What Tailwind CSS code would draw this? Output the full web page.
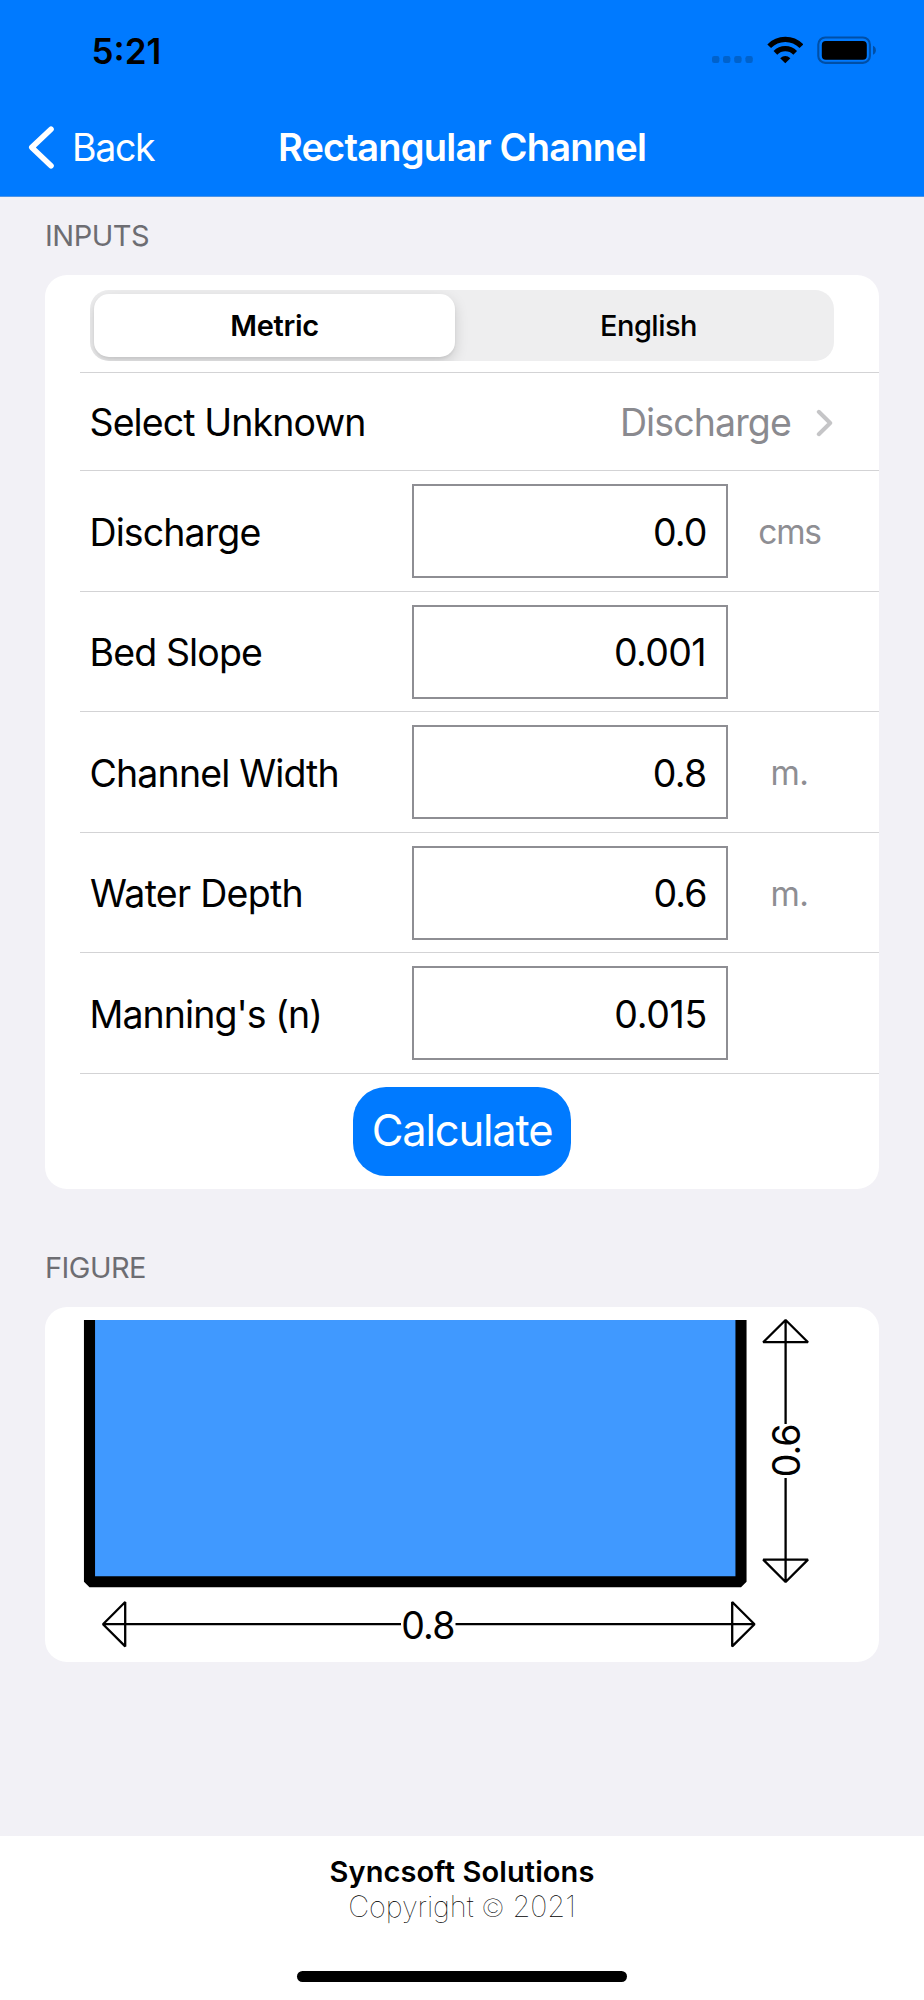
<!DOCTYPE html>
<html lang="en">
<head>
<meta charset="utf-8">
<title>Rectangular Channel</title>
<script src="https://cdn.jsdelivr.net/npm/@tailwindcss/browser@4"></script>
</head>
<body class="flex h-[2000px] w-[924px] flex-col overflow-hidden bg-[#f2f1f6] font-[Inter,'Liberation_Sans',sans-serif] text-black">

  <header class="h-[197px] shrink-0 border-b border-[#4d94e6] bg-[#007aff]">
    <!-- Status bar -->
    <div class="flex h-[98px] items-start justify-between pl-[91.5px] pr-[48px]">
      <time class="mt-[33px] text-[35px]/[36px] font-semibold">5:21</time>
      <div class="mt-[36px] flex">
        <svg class="h-7 w-[42px]" viewBox="0 0 42 28" fill="#0062cc">
          <rect x="0" y="20" width="7.4" height="7" rx="2.2"/>
          <rect x="11" y="20" width="7.4" height="7" rx="2.2"/>
          <rect x="22.2" y="20" width="7.4" height="7" rx="2.2"/>
          <rect x="33.4" y="20" width="7.4" height="7" rx="2.2"/>
        </svg>
        <svg class="ml-[13px] h-7 w-9" viewBox="0 0 36 28" fill="none" stroke="#000" stroke-width="5.2">
          <path d="M2.2 10.2A22.5 22.5 0 0 1 34.4 10.2"/>
          <path d="M8.4 16.8A14 14 0 0 1 28.2 16.8"/>
          <path d="M18.3 27.2L13.2 22.2Q18.3 17.6 23.4 22.2Z" fill="#000" stroke="none"/>
        </svg>
        <svg class="ml-[14px] h-7 w-[59px]" viewBox="0 0 59 28">
          <rect x="1.3" y="1.5" width="51.6" height="25.4" rx="7" fill="none" stroke="#004fa6" stroke-width="2.1"/>
          <rect x="4.8" y="5" width="45" height="18.8" rx="4" fill="#000"/>
          <path d="M56 9.8C59.8 11.2 59.8 17.2 56 18.8Z" fill="#004fa6"/>
        </svg>
      </div>
    </div>
    <!-- Navigation bar -->
    <div class="grid h-[98px] grid-cols-[1fr_auto_1fr] items-center text-[38px]/[46px] text-white">
      <a class="flex items-center pl-[28px]">
        <svg class="h-[44px] w-[27px]" viewBox="0 0 27 44" fill="none" stroke="#fff" stroke-width="5.6" stroke-linecap="round" stroke-linejoin="round"><path d="M23 4.2L3.8 22.4L23 40.8"/></svg>
        <span class="ml-[17px] pt-px text-[37.5px] tracking-[-1.3px]">Back</span>
      </a>
      <h1 class="font-semibold tracking-[-0.78px]">Rectangular Channel</h1>
    </div>
  </header>

  <main class="flex grow flex-col px-[45px]">
    <h2 class="mt-[21px] h-[57px] text-[29px]/[36px] tracking-[-0.5px] text-[#6d6d72]">INPUTS</h2>

    <section class="h-[914px] shrink-0 rounded-[22px] bg-white pl-[35px]">
      <div class="h-[98px] border-b border-[#d3d3d5] pl-[10px] pt-[15px]">
        <div class="flex h-[71px] w-[744px] overflow-hidden rounded-[19px] bg-[#eeeeef] text-[29px]/[64px]">
          <div class="mt-1 ml-1 h-[63px] w-[361px] rounded-[15px] bg-white text-center font-semibold tracking-[-0.3px] shadow-[0_5px_14px_rgba(0,0,0,0.15),0_2px_3px_rgba(0,0,0,0.06)]">Metric</div>
          <div class="mt-1 ml-[8px] w-[371px] text-center font-medium tracking-[-0.5px]">English</div>
        </div>
      </div>

      <div class="flex h-[98px] items-center border-b border-[#d3d3d5] pl-[9.5px] pt-[3px] text-[37.5px]/[46px]">
        <span class="tracking-[-0.9px]">Select Unknown</span>
        <span class="ml-auto tracking-[-0.87px] text-[#8a8a8f]">Discharge</span>
        <svg class="mr-[45px] ml-[24px] h-[28px] w-[19px]" viewBox="0 0 19 28" fill="none" stroke="#c5c5c7" stroke-width="4" stroke-linecap="round" stroke-linejoin="round"><path d="M3.8 2.8L15.2 14L3.8 25.2"/></svg>
      </div>

      <div class="flex h-[121px] items-start border-b border-[#d3d3d5] pt-[13px] text-[37.5px]/[96px]">
        <label class="w-[332px] pt-px pl-[9.5px] tracking-[-0.9px]">Discharge</label>
        <div class="h-[94px] w-[315.5px] border-2 border-[#8e8e93] pr-[19px] text-right leading-[94px] tracking-[-0.9px]">0.0</div>
        <span class="w-[124px] text-center text-[33.5px] tracking-[-1.3px] text-[#8e8e93]">cms</span>
      </div>
      <div class="flex h-[120px] items-start border-b border-[#d3d3d5] pt-[13px] text-[37.5px]/[96px]">
        <label class="w-[332px] pl-[9.5px] tracking-[-0.87px]">Bed Slope</label>
        <div class="h-[94px] w-[315.5px] border-2 border-[#8e8e93] pr-[19.5px] text-right leading-[92px] tracking-[-0.6px]">0.001</div>
      </div>
      <div class="flex h-[121px] items-start border-b border-[#d3d3d5] pt-[13px] text-[37.5px]/[96px]">
        <label class="w-[332px] pt-px pl-[9.5px] tracking-[-0.85px]">Channel Width</label>
        <div class="h-[94px] w-[315.5px] border-2 border-[#8e8e93] pr-[19px] text-right leading-[94px] tracking-[-0.7px]">0.8</div>
        <span class="w-[124px] text-center text-[33.5px] tracking-[-0.4px] text-[#8e8e93]">m.</span>
      </div>
      <div class="flex h-[120px] items-start border-b border-[#d3d3d5] pt-[13px] text-[37.5px]/[96px]">
        <label class="w-[332px] pl-[10px] tracking-[-0.72px]">Water Depth</label>
        <div class="h-[94px] w-[315.5px] border-2 border-[#8e8e93] pr-[19px] text-right leading-[92px] tracking-[-0.9px]">0.6</div>
        <span class="w-[124px] text-center text-[33.5px] tracking-[-0.4px] text-[#8e8e93]">m.</span>
      </div>
      <div class="flex h-[121px] items-start border-b border-[#d3d3d5] pt-[13px] text-[37.5px]/[96px]">
        <label class="w-[332px] pt-px pl-[9.5px] tracking-[-0.92px]">Manning's (n)</label>
        <div class="h-[94px] w-[315.5px] border-2 border-[#8e8e93] pr-[18.5px] text-right leading-[94px] tracking-[-0.3px]">0.015</div>
      </div>

      <div class="pt-[13px] pl-[273px]">
        <button class="block h-[89px] w-[218px] rounded-[33px] bg-[#007aff] pb-[2px] text-center text-[43.5px]/[87px] tracking-[-1.2px] text-white">Calculate</button>
      </div>
    </section>

    <h2 class="mt-[61px] h-[57px] text-[29px]/[36px] tracking-[-0.55px] text-[#6d6d72]">FIGURE</h2>

    <section class="h-[355px] shrink-0 rounded-[22px] bg-white">
      <svg class="block h-[355px] w-[834px]" viewBox="45 1307 834 355" font-family="Inter, 'Liberation Sans', sans-serif" font-size="37.5">
        <rect x="89" y="1320" width="652" height="262" fill="#4099ff"/>
        <path d="M89.5 1320V1581.8H741V1320" fill="none" stroke="#000" stroke-width="11.1" stroke-linejoin="bevel"/>
        <g fill="none" stroke="#000" stroke-width="2.3" stroke-linejoin="bevel">
          <path d="M103 1624.2H401M455.5 1624.2H754.5M125.2 1602V1646.4L103 1624.2ZM732.2 1602V1646.4L754.5 1624.2Z"/>
          <path d="M785.6 1320V1424M785.6 1478V1582M763.2 1342.2H808L785.6 1320ZM763.2 1559.6H808L785.6 1582Z"/>
        </g>
        <text x="401.3" y="1638.8" letter-spacing="-0.9">0.8</text>
        <text transform="translate(799.8 1477.3) rotate(-90)" letter-spacing="-1">0.6</text>
      </svg>
    </section>
  </main>

  <footer class="flex h-[164px] shrink-0 flex-col items-center bg-white pt-[18px] text-[29px]/[36px]">
    <strong class="font-semibold tracking-[0.12px]">Syncsoft Solutions</strong>
    <span class="-mt-px h-9 font-thin tracking-[-0.1px]">Copyright <span class="text-[25px] leading-none">©</span> 2021</span>
    <div class="mt-[46px] h-[11px] w-[330px] rounded-full bg-black"></div>
  </footer>
</body>
</html>
